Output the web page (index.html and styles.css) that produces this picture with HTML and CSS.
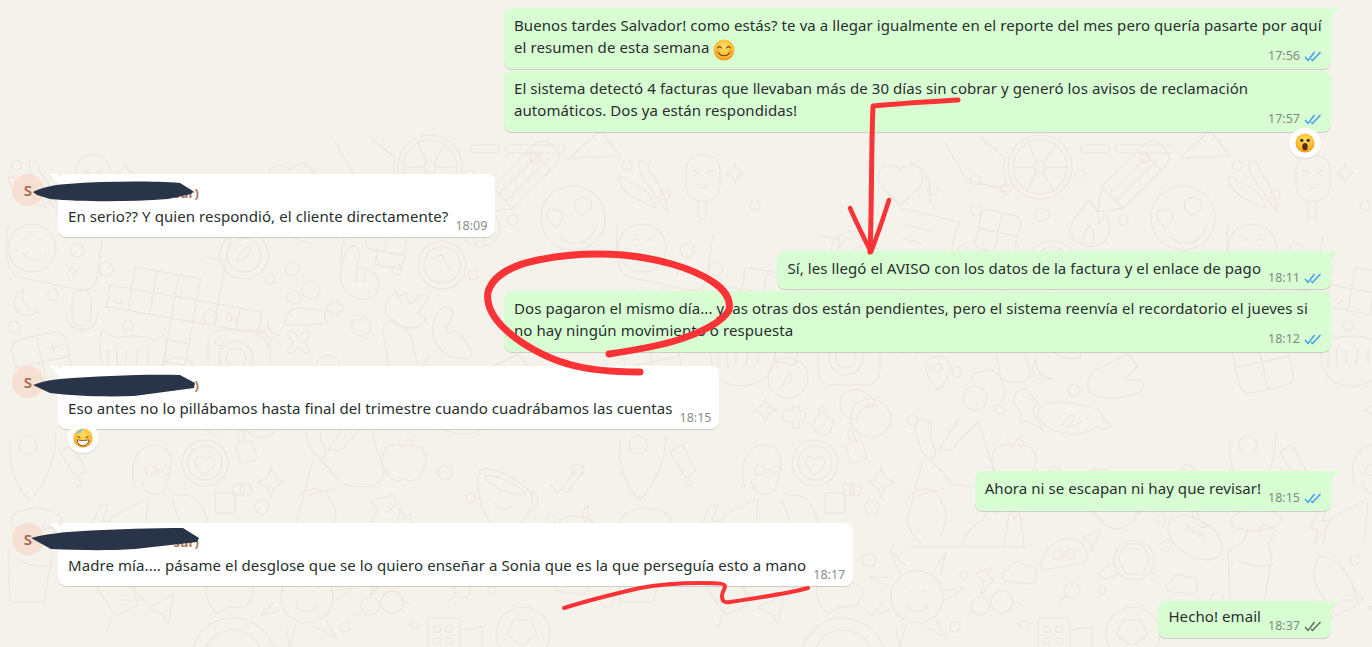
FILE: index.html
```html
<!DOCTYPE html>
<html lang="es">
	<head>
		<meta charset="UTF-8" />
		<meta name="viewport" content="width=device-width, initial-scale=1.0" />
		<title>Chat</title>
		<link rel="stylesheet" href="styles.css">
	</head>
	<body>
		<!-- wallpaper: one tile of doodles, repeated every 610px -->
		<svg class="wallpaper" viewBox="0 0 1372 647" aria-hidden="true">
			<defs>
				<g id="tile">
					<!-- smiley in bubble -->
					<path d="M8 225c-4 30 0 48 10 52l62 13c10 2 15-4 17-12l6-44" />
					<circle cx="32" cy="248" r="24" />
					<path d="M22 241c2-3 5-3 7 0M37 241c2-3 5-3 7 0M22 252c6 10 18 10 24 2M66 274l8-8M72 275l8-8" />
					<!-- moon, mic, calculator -->
					<path d="M24 290a13 13 0 1 0 14 20 14 14 0 0 1-14-20z" />
					<rect x="72" y="290" width="19" height="36" rx="9" />
					<path d="M66 312c0 24 32 24 32 0M81 328v6" />
					<g transform="rotate(-12 42 362)">
						<rect x="15" y="335" width="55" height="55" rx="11" />
						<path d="M42 335v55M15 362h55M24 362h10M50 350h12M56 344v12" />
					</g>
					<!-- cat face -->
					<path d="M102 330l14 8c12-3 26-3 38 2l10-5c4 14 2 30-8 42-14 12-36 12-48 0-8-12-10-30-6-47z" />
					<path d="M108 350v18M116 347l2 20M126 350v14M138 348l-2 18M148 348v16" />
					<!-- crossword -->
					<g transform="translate(110 285) rotate(10)">
						<path d="M0 0h154v22H0zM22 0v-22h66V0M22 0v22M44-22v44M66-22v66h22V-22M88-66h22V22M88-44h22M110 0v22M132 0v22M66 44v22h22V44" />
						<path d="M9 12a3 3 0 1 0 5 0M72-8v10M120 15v-6c3-3 5-3 5 0v6c0-6 6-6 6 0" />
					</g>
					<!-- compass and one -->
					<circle cx="244" cy="255" r="24" />
					<circle cx="244" cy="255" r="17" />
					<path d="M237 262c0-7 6-14 14-16 0 8-6 14-14 16z" />
					<circle cx="442" cy="265" r="24" />
					<circle cx="442" cy="265" r="18" />
					<path d="M432 258l10-3 8 16" />
					<!-- hands -->
					<path d="M350 247c6-4 10 2 9 10l-2 10c10 0 22 6 22 18 0 8-6 14-16 14-12 0-20-8-22-18-2-12 2-26 9-34z" />
					<path d="M358 268l-2 14M366 270l-2 12" />
					<path d="M388 300c-4 6-4 14 2 18l10 7c12 6 20 4 26-6l-8-6 10-14c0-6-6-6-10-2l-8 8-4-12-8 4-2-6z" />
					<path d="M440 310c-6 6-10 18-6 28 6 16 20 22 34 20 4 0 4-8 2-10l-10-14c-4-4-8-4-12 0l-2-6c6-8 8-14 6-18-4-4-8-4-12 0z" />
					<!-- people, camera, star, plus, bottle -->
					<circle cx="311" cy="290" r="9" />
					<circle cx="294" cy="297" r="7" />
					<path d="M286 320c0-8 8-14 16-12l24 3c-3 6-2 8 2 12-14 2-28 2-42 2-2-1-1-3 0-5z" />
					<path d="M327 305h5v-5h6v5h5v6h-5v5h-6v-5h-5z" />
					<rect x="208" y="330" width="62" height="55" rx="14" />
					<circle cx="236" cy="358" r="17" />
					<circle cx="236" cy="358" r="10" />
					<circle cx="219" cy="342" r="4" />
					<path d="M268 322c1 8 4 11 11 13-7 2-10 5-11 13-1-8-4-11-11-13 7-2 10-5 11-13z" />
					<path d="M294 332l5 5 5-5c5-3 8 1 5 5l-5 5 5 5c3 4 0 8-5 5l-5-5-5 5c-5 3-8-1-5-5l5-5-5-5c-3-4 0-8 5-5z" />
					<path d="M384 325l8-5 6 6c8 0 12 8 14 16l8 30c0 6-4 10-10 10h-10c-6 0-8-4-10-8l-6-36c-2-6-2-8 0-13z" />
					<path d="M352 320h10v-4h4v4h4v12l-8 5-10-5z" />
					<!-- wheel -->
					<circle cx="430" cy="167" r="32" />
					<circle cx="430" cy="167" r="27" />
					<circle cx="430" cy="167" r="6" />
					<path d="M424 167h-21M436 167h22M426 162l-8-21M434 162l12-19M433 172l11 20M426 172l-9 20" />
					<path d="M335 142l18 32c6 10 30 14 44 12-4-8-4-18-2-28l-26-22" />
					<path d="M368 182l28 10" />
					<circle cx="396" cy="189" r="5" />
					<!-- pencil, triangle, chili, popsicle, star -->
					<g transform="rotate(-45 527 173)">
						<path d="M492 158h62c6 0 10 6 10 15s-4 15-10 15h-62l-20-15z" />
						<path d="M492 158v30M492 168h62M492 178h62M546 158v30" />
					</g>
					<path d="M600 130l-30 28 50-2z" />
					<path d="M18 182c-4-6-8-5-10-4 3 10 8 16 20 22l18 8c-4-14-14-22-28-26zM30 160c-2 8 0 14 6 22l10 14c4 6 8 14 12 16-2-14-8-30-20-42 2-4 0-8-4-8z" />
					<rect x="76" y="155" width="34" height="46" rx="15" />
					<path d="M88 201v14c0 6 8 6 8 0v-14M83 170l6 3-6 3M103 170l-6 3 6 3M89 184c2 6 6 6 8 0" />
					<path d="M125 163c1 6 4 9 9 10-5 1-8 4-9 10-1-6-4-9-9-10 5-1 8-4 9-10z" />
					<!-- heart-eyes face, fire, heart, note, waffle -->
					<circle cx="573" cy="218" r="32" />
					<path d="M556 210c-8-4-12 6-6 12l6 6 6-8c2-6-2-12-6-10zM584 198c-8-2-12 6-8 12l6 6 8-6c4-8-1-12-6-12zM560 236c10 12 30 10 36-10" />
					<path d="M478 200c8 6 12 14 10 24 4-2 6-6 6-10 8 8 8 24-4 30-12 6-26 0-30-12-2-12 10-16 18-32z" />
					<path d="M476 244c-6-6-2-12 4-18 4 6 6 12 2 18" />
					<path d="M290 205l-18-18c-8-10-2-24 10-22 4 0 6 2 8 6 2-4 6-6 10-6 12 0 16 12 10 22z" />
					<path d="M300 162c12 4 20 14 20 30v12" />
					<path d="M290 208l60 14-6 16-4 24M294 224l30 8M292 238l20 6" />
					<g transform="rotate(12 387 232)">
						<rect x="368" y="212" width="40" height="40" rx="6" />
						<path d="M388 212v40M368 232h40M382 250v16h24c2 0 3-2 3-4v-14" />
					</g>
					<!-- clock, sparkle, plus, lock, dumplings -->
					<circle cx="178" cy="378" r="20" />
					<path d="M172 386l8-14 2 10zM166 366l2 2M190 366l-2 2" />
					<path d="M155 398c1 7 5 10 11 12-6 2-10 5-11 12-1-7-5-10-11-12 6-2 10-5 11-12z" />
					<path d="M178 410h5v-4h6v4c8 0 8 12 0 12v4c0 4-6 4-6 0v-4h-5c-8 0-8-12 0-12z" />
					<rect x="204" y="415" width="18" height="18" rx="4" transform="rotate(30 213 424)" />
					<path d="M208 412c0-6 8-6 8 0" />
					<path d="M240 390c12-2 22 4 26 16-8-2-18 4-20 14-10-2-16-8-16-16 0-8 4-12 10-14z" />
					<path d="M247 403c10-8 26-4 32 8 6 14-6 28-20 26-12-2-22-12-18-24 1-4 3-8 6-10zM258 403l-2 4M264 404l-2 4" />
					<!-- girl with bottle, sitting -->
					<circle cx="365" cy="398" r="12" />
					<path d="M362 382c-2-6 4-12 10-10 8-6 22 2 20 14 6 8 0 20-10 20" />
					<path d="M350 418c-10 12-14 24-22 32h14c6-8 10-14 26-28 6 8 6 22 12 36 6 14 4 24-8 28-10 2-20 0-30-2-8-10-14-18-22-24" />
					<path d="M306 432c-4-8 4-16 10-12 8 4 6 12 4 18 4 8 8 14 4 20-8 2-14-6-18-26z" />
					<path d="M313 460l-16 60c0 8 6 16 14 24M298 497c6-10 24-10 30-2 10 16 10 24 2 42M308 495l26-6" />
					<path d="M297 547h120M394 547l6-40 4 12 6-6 4 34M352 547c2-10 8-20 20-26l6-12-8-8 24-6 2 10-10 8" />
					<!-- apple, pin, note, moon, hand -->
					<path d="M402 447c-8-6-20 0-20 12 0 12 10 22 16 22 2 0 4-2 6-2 2 0 4 2 6 2 8 0 16-10 16-22 0-12-14-18-24-12z" />
					<path d="M402 446l6-8 6 4-4 6M396 438l6 8" />
					<path d="M328 356c-10 0-14 8-12 16 2 6 8 12 12 18 6-6 10-12 12-18 2-8-2-16-12-16z" />
					<circle cx="328" cy="368" r="4" />
					<path d="M405 394l10-6 14 16-6 4 2 8 8 14-14-8-10 0 2-8-8-12z" />
					<path d="M434 405c8-6 50 0 58 8 0 6 4 10 10 14-6 2-12 2-16 0-8 6-20 8-30 6-14-2-26-8-28-18 0-4 2-8 6-10z" />
					<path d="M452 425c4-8 10-12 12-8 2 4-6 8-8 10 6 2 12-4 16-6" />
					<path d="M428 358a12 12 0 1 0 14 20 14 14 0 0 1-14-20z" />
					<path d="M480 392c-6-8 0-20 10-24l28-14 10 12-14 14 16 0c6 4 4 12-4 14-14 4-34 8-46-2z" />
					<!-- man with glasses, latte, lock, sparkle, squares -->
					<path d="M135 488c-4-14-4-28 6-38 8-8 24-6 28 4 4 6 2 14 0 22l-4 12c-4 8-14 8-20 2l-4-8" />
					<circle cx="150" cy="470" r="5" />
					<circle cx="166" cy="470" r="4" />
					<path d="M155 470h7M145 500l-28 14c-6 4-12 14-14 30M148 500l-4 44M172 500l16 44M172 494l18 2c8 2 14 12 18 26" />
					<circle cx="205" cy="463" r="23" />
					<circle cx="205" cy="463" r="17" />
					<path d="M205 475l-8-8c-6-8 4-14 8-7 4-7 14-1 8 7z" />
					<rect x="238" y="442" width="17" height="20" rx="4" transform="rotate(-18 246 452)" />
					<path d="M240 442l-2-8c-2-4 4-6 5-2l2 8" />
					<path d="M271 466c1 9 5 14 13 16-8 3-12 8-13 16-1-8-5-13-13-16 8-2 12-7 13-16z" />
					<rect x="215" y="493" width="20" height="20" />
					<rect x="233" y="484" width="11" height="11" />
					<!-- cup, double check, moon, shield, tube -->
					<path d="M480 470c12-6 40 10 52 24 2 12-6 26-18 34-14 4-26-6-32-20-4-14-6-32-2-38z" />
					<path d="M484 476c12-2 30 6 42 18-14 2-34-6-42-18zM532 492c8 0 8 14-4 22M494 502c2 8 12 10 16 4" />
					<path d="M550 484l6 8c1 1 2 1 3 0l18-24M564 492c1 1 2 1 3 0l16-20" />
					<path d="M590 504a12 12 0 1 0 10 22 14 14 0 0 1-10-22z" />
					<path d="M10 440c-2 24 6 50 20 60 14-14 26-38 26-66" />
					<circle cx="28" cy="445" r="9" />
					<path d="M72 444l14 26-10 8-16-26zM78 478l4 6-4 3-4-5" />
					<!-- bottle, taco, lightning, rocket -->
					<path d="M24 540l4-10 10 2 6-8 12 6-8 14 4 12-8 46-34 0-2-50z" />
					<path d="M18 560c12 6 24 8 36 4" />
					<path d="M12 518c8-12 36-14 50 0-2 6-6 10-10 10-14 4-24 4-36 0-4 0-6-6-4-10z" />
					<path d="M100 505l-10 24h8l-4 16 16-24h-8l6-16z" />
					<path d="M100 555c-8 10-8 24 0 38l16 22 22-10 -4-16c-4-16-18-30-34-34zM120 600l24 0-12-12M112 615l-4 14" />
					<!-- football, cloud -->
					<ellipse cx="585" cy="538" rx="30" ry="18" transform="rotate(32 585 538)" />
					<path d="M574 524l22 14M576 530l4-4M582 533l4-4M588 537l4-4" />
					<path d="M562 592c-8 0-8-10 0-10 0-8 10-10 14-4 6-4 14 2 10 8 4 4 0 8-4 8z" />
					<!-- blob, arrow, turtle, ball -->
					<path d="M432 570c-4-12 6-26 20-30 12-4 22 2 26 14 0 6-4 10-10 10z" />
					<circle cx="448" cy="555" r="5" />
					<circle cx="460" cy="554" r="5" />
					<path d="M472 538l18-8-8 20-2-8z" />
					<circle cx="524" cy="560" r="20" />
					<path d="M516 544l16 0 8 14-8 16h-16l-8-16zM505 562l-16 10c0 6 6 8 10 6l10-4M540 572l10 6M548 546c4-6 12-8 14-2 0 4-4 8-8 8" />
					<circle cx="523" cy="634" r="27" />
					<path d="M513 620l18 0 6 14-15 12-15-12z" />
					<!-- sun, bubble, cloud, lightning, glasses -->
					<circle cx="307" cy="597" r="26" />
					<path d="M296 604c4 10 18 10 22 0M300 590v2M314 590v2M290 574l-10-24 16 16M322 574l14-22-6 24M334 590l20-2-18 12M326 620l10 18-22-12M296 624l-6 24-4-20M280 610l-20 6 14-14M278 586l-20-10 20 2" />
					<path d="M210 580c16-4 34 0 44 10-2 4-4 12-8 16l-20 2-8 6-6-6c-6-8-8-20-2-28z" />
					<path d="M398 582c-8-2-8-12 0-12 2-10 14-10 16-4 8-4 16 4 10 10 4 4 2 8-4 8z" />
					<path d="M378 568l-12 6 8 8-4 14 14-16-8-6 6-6z" />
					<circle cx="370" cy="606" r="9" />
					<circle cx="392" cy="602" r="11" />
					<path d="M379 604l2-1M403 602l8 2M362 610l-6 8" />
					<circle cx="462" cy="590" r="8" />
					<path d="M456 596l-8 6" />
					<rect x="428" y="618" width="32" height="40" rx="3" />
					<path d="M460 630l22-3v22M434 626h6v6h-6zM446 626h6v6h-6zM434 638h6v6h-6zM446 638h6v6h-6z" />
					<circle cx="233" cy="660" r="42" />
					<circle cx="233" cy="660" r="30" />
					<path d="M148 608l26-14-6 30-6-10z" />
					<!-- small bubbles -->
					<path d="M70 250a7 7 0 1 0 14 0 7 7 0 1 0-14 0M99 269a7 7 0 1 0 14 0 7 7 0 1 0-14 0M285 269a7 7 0 1 0 14 0 7 7 0 1 0-14 0M48 295a5 5 0 1 0 10 0 5 5 0 1 0-10 0M123 326a5 5 0 1 0 10 0 5 5 0 1 0-10 0M203 317a7 7 0 1 0 14 0 7 7 0 1 0-14 0M265 279a5 5 0 1 0 10 0 5 5 0 1 0-10 0M8 327a6 6 0 1 0 12 0 6 6 0 1 0-12 0M392 270a5 5 0 1 0 10 0 5 5 0 1 0-10 0M468 275a5 5 0 1 0 10 0 5 5 0 1 0-10 0M342 372a5 5 0 1 0 10 0 5 5 0 1 0-10 0M298 420a5 5 0 1 0 10 0 5 5 0 1 0-10 0M458 390a6 6 0 1 0 12 0 6 6 0 1 0-12 0M386 410a4 4 0 1 0 8 0 4 4 0 1 0-8 0M240 490a6 6 0 1 0 12 0 6 6 0 1 0-12 0M255 507a7 7 0 1 0 14 0 7 7 0 1 0-14 0M438 473a7 7 0 1 0 14 0 7 7 0 1 0-14 0M466 498a5 5 0 1 0 10 0 5 5 0 1 0-10 0M546 520a5 5 0 1 0 10 0 5 5 0 1 0-10 0M572 470a6 6 0 1 0 12 0 6 6 0 1 0-12 0M252 560a7 7 0 1 0 14 0 7 7 0 1 0-14 0M350 575a4 4 0 1 0 8 0 4 4 0 1 0-8 0M488 590a4 4 0 1 0 8 0 4 4 0 1 0-8 0M340 627a5 5 0 1 0 10 0 5 5 0 1 0-10 0M410 625a4 4 0 1 0 8 0 4 4 0 1 0-8 0M600 600a7 7 0 1 0 14 0 7 7 0 1 0-14 0M196 568a5 5 0 1 0 10 0 5 5 0 1 0-10 0M130 560a5 5 0 1 0 10 0 5 5 0 1 0-10 0M360 180a5 5 0 1 0 10 0 5 5 0 1 0-10 0M318 190a5 5 0 1 0 10 0 5 5 0 1 0-10 0M360 210a6 6 0 1 0 12 0 6 6 0 1 0-12 0M425 215a7 7 0 1 0 14 0 7 7 0 1 0-14 0M508 220a5 5 0 1 0 10 0 5 5 0 1 0-10 0M530 158a5 5 0 1 0 10 0 5 5 0 1 0-10 0M465 175a5 5 0 1 0 10 0 5 5 0 1 0-10 0M50 195a5 5 0 1 0 10 0 5 5 0 1 0-10 0M12 165a5 5 0 1 0 10 0 5 5 0 1 0-10 0M140 205a5 5 0 1 0 10 0 5 5 0 1 0-10 0M510 145h50c6 0 6 8 0 8h-50c-6 0-6-8 0-8zM475 145h20c6 0 6 8 0 8h-20c-6 0-6-8 0-8z" />
				</g>
				<path id="dblcheck" d="M1 6l3 3.5L10.500 1M7 8l1.500 1.500L16.500 1" />
			</defs>
			<use href="#tile" />
			<use href="#tile" x="610" />
			<use href="#tile" x="1220" />
		</svg>

		<main class="chat">
			<div class="row out">
				<div class="bubble tail wide">
					<p>Buenos tardes Salvador! como estás? te va a llegar igualmente en el reporte del mes pero quería pasarte por aquí<br>el resumen de esta semana
						<svg class="emoji" viewBox="0 0 22 22"><use href="#smile" /></svg>
					</p>
					<div class="meta"><span>17:56</span><svg class="ticks" viewBox="0 0 18 11"><use href="#dblcheck" /></svg></div>
				</div>
			</div>
			<div class="row out joined">
				<div class="bubble wide">
					<p>El sistema detectó 4 facturas que llevaban más de 30 días sin cobrar y generó los avisos de reclamación<br>automáticos. Dos ya están respondidas!</p>
					<div class="meta"><span>17:57</span><svg class="ticks" viewBox="0 0 18 11"><use href="#dblcheck" /></svg></div>
					<div class="reaction reaction-right">
						<svg class="emoji-small" viewBox="0 0 22 22">
							<circle cx="11" cy="11" r="10.500" fill="url(#face)" />
							<circle cx="7.500" cy="8" r="1.800" fill="#4a2c10" />
							<circle cx="14.500" cy="8" r="1.800" fill="#4a2c10" />
							<ellipse cx="11" cy="15" rx="3" ry="4" fill="#5c2c12" />
						</svg>
					</div>
				</div>
			</div>

			<div class="row in far">
				<div class="avatar">S</div>
				<div class="bubble tail">
					<div class="name">sur)</div>
					<div class="line">
						<p>En serio?? Y quien respondió, el cliente directamente?</p>
						<div class="meta"><span>18:09</span></div>
					</div>
				</div>
			</div>

			<div class="row out near">
				<div class="bubble tail">
					<div class="line">
						<p>Sí, les llegó el AVISO con los datos de la factura y el enlace de pago</p>
						<div class="meta"><span>18:11</span><svg class="ticks" viewBox="0 0 18 11"><use href="#dblcheck" /></svg></div>
					</div>
				</div>
			</div>
			<div class="row out joined">
				<div class="bubble wide">
					<p>Dos pagaron el mismo día... y las otras dos están pendientes, pero el sistema reenvía el recordatorio el jueves si<br>no hay ningún movimiento o respuesta</p>
					<div class="meta"><span>18:12</span><svg class="ticks" viewBox="0 0 18 11"><use href="#dblcheck" /></svg></div>
				</div>
			</div>

			<div class="row in near">
				<div class="avatar">S</div>
				<div class="bubble tail">
					<div class="name">)</div>
					<div class="line">
						<p>Eso antes no lo pillábamos hasta final del trimestre cuando cuadrábamos las cuentas</p>
						<div class="meta"><span>18:15</span></div>
					</div>
					<div class="reaction reaction-left">
						<svg class="emoji-small" viewBox="0 0 22 22">
							<circle cx="11" cy="11" r="10.500" fill="url(#face)" />
							<path d="M4 6c1-3 4-5 7-5-1 3-3 5-7 5z" fill="#7cc4ee" />
							<path d="M5 9.500l3 1M17 9.500l-3 1" stroke="#4a2c10" fill="none" />
							<path d="M4.500 13c3 1 10 1 13 0-.5 4-3 6.500-6.500 6.500S5 17 4.500 13z" fill="#fff" stroke="#5c2c12" stroke-width=".8" />
						</svg>
					</div>
				</div>
			</div>

			<div class="row out far">
				<div class="bubble tail roomy">
					<div class="line">
						<p>Ahora ni se escapan ni hay que revisar!</p>
						<div class="meta"><span>18:15</span><svg class="ticks" viewBox="0 0 18 11"><use href="#dblcheck" /></svg></div>
					</div>
				</div>
			</div>

			<div class="row in close">
				<div class="avatar">S</div>
				<div class="bubble tail">
					<div class="name">sur)</div>
					<div class="line">
						<p>Madre mía.... pásame el desglose que se lo quiero enseñar a Sonia que es la que perseguía esto a mano</p>
						<div class="meta"><span>18:17</span></div>
					</div>
				</div>
			</div>

			<div class="row out last">
				<div class="bubble tail tight">
					<div class="line">
						<p>Hecho! email</p>
						<div class="meta"><span>18:37</span><svg class="ticks delivered" viewBox="0 0 18 11"><use href="#dblcheck" /></svg></div>
					</div>
				</div>
			</div>
		</main>

		<!-- red marker and redaction scribbles drawn over the screenshot -->
		<svg class="marks" viewBox="0 0 1372 647" aria-hidden="true">
			<defs>
				<radialGradient id="face" cx="50%" cy="35%" r="70%">
					<stop offset="0" stop-color="#ffe067" />
					<stop offset="0.65" stop-color="#fbbb2e" />
					<stop offset="1" stop-color="#ee8a12" />
				</radialGradient>
				<g id="smile">
					<circle cx="11" cy="11" r="10.500" fill="url(#face)" />
					<path d="M4.500 9c1-1.800 3-1.800 4 0M13.500 9c1-1.800 3-1.800 4 0M5 13c2.500 5 9.500 5 12 0" fill="none" stroke="#6b3a10" stroke-width="1.100" stroke-linecap="round" />
					<circle cx="4.500" cy="12.500" r="1.800" fill="#f79a4a" opacity=".6" />
					<circle cx="17.500" cy="12.500" r="1.800" fill="#f79a4a" opacity=".6" />
				</g>
			</defs>
			<path class="scribble" d="M33 192c8-4 18-7 34-8 40-3 85-3 113-1l13 8-2 3-23 5c-40 3-85 3-118 0l-13-4z" />
			<path class="scribble" d="M33 385c8-3 16-5 27-6 40-3 85-5 120-4l15 8-1 5-60 8c-30 1-60 0-84-3z" />
			<path class="scribble" d="M31 538c16-4 32-6 52-7 35-2 70-3 100-3l16 10-2 4-62 7c-30 2-58 1-84 0z" />
			<path class="marker" d="M958 100c-28 2-55 3-85 6-2 45-1 100-3 146" stroke-width="5" />
			<path class="marker" d="M850 208c6 14 14 30 21 44 6-16 13-36 18-52" stroke-width="4.500" />
			<path class="marker" d="M640 372c-30 0-52-2-72-8-22-6-47-20-62-34-14-13-20-26-18-38 4-14 20-26 50-32 30-6 60-7 85-5 32 3 68 12 90 27 12 8 18 18 16 28-6 12-30 24-58 32-22 6-42 9-62 12" stroke-width="7" />
			<path class="marker" d="M564 608c25-8 50-14 76-20 22-4 44-5 60-5 14 0 25 0 25 3s-3 6-3 10c0 5 2 7 8 6 28-4 56-8 78-14" stroke-width="4" />
		</svg>
	</body>
</html>
```

FILE: styles.css
```css
html,
body {
	margin: 0;
	height: 647px;
	overflow: hidden;
}

body {
	position: relative;
	background-color: #f5f1eb;
	font-family: 'Noto Sans', sans-serif;
	font-size: 15px;
	letter-spacing: 0.08px;
	line-height: 22px;
	color: #25302b;
}

p {
	margin: 0;
}

.wallpaper,
.marks {
	position: absolute;
	top: 0;
	left: 0;
	width: 1372px;
	height: 647px;
}

.wallpaper {
	fill: none;
	stroke: #ede6df;
	stroke-width: 1.2;
}

.marks {
	pointer-events: none;
}

.marker {
	fill: none;
	stroke: #fb3336;
	stroke-linecap: round;
	stroke-linejoin: round;
}

.scribble {
	fill: #2a3448;
}

.chat {
	position: relative;
	display: flex;
	flex-direction: column;
	padding: 8px 41px 0 12px;
}

.row {
	display: flex;
}

.row.out {
	justify-content: flex-end;
}

.row.in {
	gap: 14px;
}

.joined {
	margin-top: 2px;
}

.close {
	margin-top: 12px;
}

.near {
	margin-top: 14px;
}

.last {
	margin-top: 15px;
}

.far {
	margin-top: 42px;
}

.avatar {
	width: 32px;
	height: 32px;
	border-radius: 50%;
	background-color: #f6dfd3;
	color: #a5684a;
	font-weight: 600;
	text-align: center;
	line-height: 32px;
}

.bubble {
	position: relative;
	padding: 6px 8px 10px 10px;
	border-radius: 8px;
	background-color: #fff;
	box-shadow: 0 1px 0.5px rgba(11, 20, 26, 0.16);
}

.out .bubble {
	background-color: #d9fdd3;
	padding-right: 9px;
}

.out .wide {
	width: 808px;
	padding-bottom: 5px;
}

.wide p {
	white-space: nowrap;
}

.out .roomy {
	padding-bottom: 12px;
}

.out .tight {
	padding-top: 4px;
	padding-bottom: 11px;
}

.tail::after {
	content: '';
	position: absolute;
	top: 0;
	width: 9px;
	height: 10px;
	background-color: inherit;
}

.in .tail::after {
	left: -8px;
	clip-path: polygon(0 0, 100% 0, 100% 100%);
}

.out .tail::after {
	right: -8px;
	clip-path: polygon(0 0, 100% 0, 0 100%);
}

.name {
	height: 23px;
	width: 131px;
	padding-top: 2px;
	color: #a9775b;
	font-weight: 700;
	font-size: 13px;
	text-align: right;
}

.line {
	display: flex;
	gap: 7px;
}

.meta {
	display: flex;
	align-items: center;
	justify-content: flex-end;
	gap: 4px;
	height: 16px;
	color: #7e8b83;
	font-size: 12.5px;
	letter-spacing: 0;
	line-height: 16px;
}

.in .meta {
	color: #8a8d8c;
}

.line .meta {
	align-self: flex-end;
	margin-bottom: -7px;
}

.wide .meta {
	margin-top: -10px;
}

.ticks {
	width: 18px;
	height: 11px;
	fill: none;
	stroke: #3d9bf0;
	stroke-width: 1.4;
}

.ticks.delivered {
	stroke: #5c6862;
}

.emoji {
	width: 22px;
	height: 22px;
	margin: -3px 0;
	vertical-align: -5px;
}

.reaction {
	position: absolute;
	display: flex;
	align-items: center;
	justify-content: center;
	width: 32px;
	height: 30px;
	border-radius: 50%;
	background-color: #fff;
	box-shadow: 0 1px 2px rgba(11, 20, 26, 0.1);
}

.reaction-right {
	right: 10px;
	bottom: -26px;
}

.reaction-left {
	left: 9px;
	bottom: -24px;
}

.emoji-small {
	width: 20px;
	height: 20px;
}
```
